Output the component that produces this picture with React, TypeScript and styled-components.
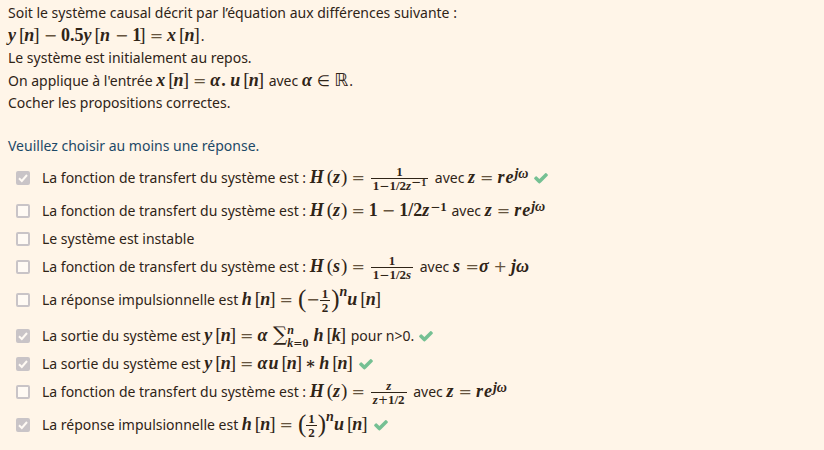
import React from "react";
import styled, { createGlobalStyle } from "styled-components";

const GlobalStyle = createGlobalStyle`
  *, *::before, *::after { box-sizing: border-box; }
  html, body { margin: 0; background: #fff5e8; }
  body { color: #2f2417; font: 14px/22px "Noto Sans", "Open Sans", sans-serif; }
`;

const Question = styled.main`
  padding: 2px 8px 8px;
`;
const Statement = styled.p<{ $math?: boolean }>`
  margin: 0;
  height: ${(p) => (p.$math ? 23 : 22)}px;
  line-height: ${(p) => (p.$math ? 23 : 22)}px;
  white-space: nowrap;
`;
const Answers = styled.fieldset`
  margin: 21px 0 0;
  padding: 0;
  border: 0;
`;
const Prompt = styled.legend`
  padding: 0;
  margin: 0 0 7px;
  color: #1d4967;
`;
const Row = styled.div<{ $gap?: number }>`
  display: flex;
  align-items: center;
  height: 28px;
  margin-top: ${(p) => p.$gap ?? 0}px;
  padding-left: 8px;
`;
const Box = styled.span`
  display: grid;
  flex: none;
  width: 14px;
  height: 14px;
  margin-right: 12px;
  > * { grid-area: 1 / 1; }
`;
const Check = styled.input`
  appearance: none;
  width: 14px;
  height: 14px;
  margin: 0;
  border: 2px solid #c9c4c7;
  border-radius: 2px;
  background: #fffaf4;
  &:checked { background: #c9c4c7; }
`;
const Tick = styled.svg`
  width: 14px;
  height: 14px;
  pointer-events: none;
`;
const Label = styled.label`
  line-height: 28px;
  white-space: nowrap;
`;
const Correct = styled.svg`
  flex: none;
  width: 16px;
  height: 16px;
  margin-left: 4px;
  fill: #75c093;
`;

const Formula = styled.span`
  font: bold 18px/1 "Liberation Serif", "DejaVu Serif", serif;
  line-height: 0;
  margin-right: 1px;
  white-space: nowrap;
`;
const V = styled.i`
  font-size: 18px;
  margin-right: 1px;
`;
const Op = styled.span<{ $tight?: boolean }>`
  font: normal 16px/0 "DejaVu Sans", sans-serif;
  color: #66543f;
  margin: 0 ${(p) => (p.$tight ? 0 : 4)}px;
`;
const Star = styled.span`
  font-size: 16px;
  margin: 0 3px;
`;
const Bracket = styled.span<{ $open?: boolean }>`
  font-size: 19px;
  font-weight: normal;
  margin-left: ${(p) => (p.$open ? 2 : 0)}px;
`;
const Square = styled.span<{ $open?: boolean }>`
  font-size: 19px;
  font-weight: normal;
  margin: ${(p) => (p.$open ? "0 -1px 0 2px" : "0 0 0 -2px")};
`;
const Tall = styled.span`
  font-size: 25px;
  font-weight: normal;
  margin-left: 1px;
  vertical-align: -2px;
`;
const Sup = styled.sup<{ $high?: boolean }>`
  font-size: 13px;
  line-height: 0;
  vertical-align: ${(p) => (p.$high ? 9 : 5)}px;
  i { font-size: 14px; }
`;
const Minus = styled.span`
  font: normal 12px/0 "DejaVu Sans", sans-serif;
`;
const Fraction = styled.span<{ $narrow?: boolean }>`
  display: inline-flex;
  flex-direction: column;
  align-items: center;
  vertical-align: middle;
  margin: 0 ${(p) => (p.$narrow ? 0 : 2)}px;
  font-size: 13px;
  line-height: 12px;
  i { font-size: 13px; margin: 0; }
  sup { font-size: 10px; vertical-align: 4px; }
`;
const Denominator = styled.span`
  border-top: 1px solid #2f2417;
  padding: 1px 2px 0;
`;
const Limits = styled.span`
  display: inline-flex;
  flex-direction: column;
  vertical-align: middle;
  margin-right: 5px;
  font-size: 12px;
  line-height: 13px;
  i { font-size: 12px; margin: 0; }
`;
const Sigma = styled.span`
  font: normal 20px/0 "DejaVu Serif", serif;
`;
const Equals = styled.span`
  font: normal 11px/0 "DejaVu Sans", sans-serif;
`;
const Blackboard = styled.span`
  font: normal 18px/0 "DejaVu Sans", sans-serif;
`;
const Member = styled.span`
  font: normal 15px/0 "DejaVu Sans", sans-serif;
  margin: 0 4px;
`;

const Of = ({ f, v }: { f: string; v: string }) => (
  <><V>{f}</V><Square $open>[</Square><V>{v}</V><Square>]</Square></>
);
const Transfer = ({ v }: { v: string }) => (
  <><V>H</V><Bracket $open>(</Bracket><V>{v}</V><Bracket>)</Bracket><Op>=</Op></>
);
const Frac = ({ top, narrow, children }: { top: React.ReactNode; narrow?: boolean; children: React.ReactNode }) => (
  <Fraction $narrow={narrow}><span>{top}</span><Denominator>{children}</Denominator></Fraction>
);
const Polar = () => (
  <Formula><V>z</V><Op>=</Op><V>r</V><V>e</V><Sup><i>jω</i></Sup></Formula>
);

type Answer = { checked?: boolean; gap?: number; body: React.ReactNode };

const answers: Answer[] = [
  {
    checked: true,
    body: (
      <>La fonction de transfert du système est : <Formula><Transfer v="z" />
        <Frac top="1">1<Minus>−</Minus>1/2<i>z</i><Sup><Minus>−</Minus>1</Sup></Frac></Formula> avec <Polar /></>
    ),
  },
  {
    gap: 5,
    body: (
      <>La fonction de transfert du système est : <Formula><Transfer v="z" />1<Op>−</Op>1/2<V>z</V><Sup><Minus>−</Minus>1</Sup></Formula> avec <Polar /></>
    ),
  },
  { body: <>Le système est instable</> },
  {
    body: (
      <>La fonction de transfert du système est : <Formula><Transfer v="s" />
        <Frac top="1">1<Minus>−</Minus>1/2<i>s</i></Frac></Formula> avec{" "}
        <Formula><V>s</V> <Op $tight>=</Op><V>σ</V><Op>+</Op><V>jω</V></Formula></>
    ),
  },
  {
    gap: 5,
    body: (
      <>La réponse impulsionnelle est <Formula><Of f="h" v="n" /><Op>=</Op><Tall>(</Tall><Op $tight>−</Op>
        <Frac top="1" narrow>2</Frac><Tall>)</Tall><Sup $high><i>n</i></Sup><Of f="u" v="n" /></Formula></>
    ),
  },
  {
    checked: true,
    gap: 8,
    body: (
      <>La sortie du système est <Formula><Of f="y" v="n" /><Op>=</Op><V>α</V> <Sigma>∑</Sigma>
        <Limits><i>n</i><span><i>k</i><Equals>=</Equals>0</span></Limits><Of f="h" v="k" /></Formula> pour n&gt;0.</>
    ),
  },
  {
    checked: true,
    body: (
      <>La sortie du système est <Formula><Of f="y" v="n" /><Op>=</Op><V>α</V><Of f="u" v="n" /><Star>∗</Star><Of f="h" v="n" /></Formula></>
    ),
  },
  {
    body: (
      <>La fonction de transfert du système est : <Formula><Transfer v="z" />
        <Frac top={<i>z</i>}><i>z</i><Minus>+</Minus>1/2</Frac></Formula> avec <Polar /></>
    ),
  },
  {
    checked: true,
    gap: 5,
    body: (
      <>La réponse impulsionnelle est <Formula><Of f="h" v="n" /><Op>=</Op><Tall>(</Tall>
        <Frac top="1" narrow>2</Frac><Tall>)</Tall><Sup $high><i>n</i></Sup><Of f="u" v="n" /></Formula></>
    ),
  },
];

export default function App() {
  return (
    <>
      <GlobalStyle />
      <Question>
        <Statement>Soit le système causal décrit par l’équation aux différences suivante :</Statement>
        <Statement $math>
          <Formula><Of f="y" v="n" /><Op>−</Op>0.5<V>y</V><Square $open>[</Square><V>n</V><Op>−</Op>1<Square>]</Square><Op>=</Op><Of f="x" v="n" /></Formula>.
        </Statement>
        <Statement>Le système est initialement au repos.</Statement>
        <Statement $math>
          On applique à l'entrée <Formula><Of f="x" v="n" /><Op>=</Op><V>α</V>. <Of f="u" v="n" /></Formula> avec{" "}
          <Formula><V>α</V><Member>∈</Member><Blackboard>ℝ</Blackboard></Formula>.
        </Statement>
        <Statement>Cocher les propositions correctes.</Statement>
        <Answers>
          <Prompt>Veuillez choisir au moins une réponse.</Prompt>
          {answers.map((a, i) => (
            <Row key={i} $gap={a.gap}>
              <Box>
                <Check type="checkbox" id={`choice${i}`} defaultChecked={a.checked} disabled />
                {a.checked && (
                  <Tick viewBox="0 0 14 14" aria-hidden="true">
                    <path d="M3 7.2 5.8 10 11 4" fill="none" stroke="#fffaf4" strokeWidth="2" />
                  </Tick>
                )}
              </Box>
              <Label htmlFor={`choice${i}`}>{a.body}</Label>
              {a.checked && (
                <Correct viewBox="0 0 1792 1792" role="img" aria-label="Correct">
                  <path d="M1671 566q0 40-28 68l-724 724-136 136q-28 28-68 28t-68-28l-136-136-362-362q-28-28-28-68t28-68l136-136q28-28 68-28t68 28l294 295 656-657q28-28 68-28t68 28l136 136q28 28 28 68z" />
                </Correct>
              )}
            </Row>
          ))}
        </Answers>
      </Question>
    </>
  );
}
